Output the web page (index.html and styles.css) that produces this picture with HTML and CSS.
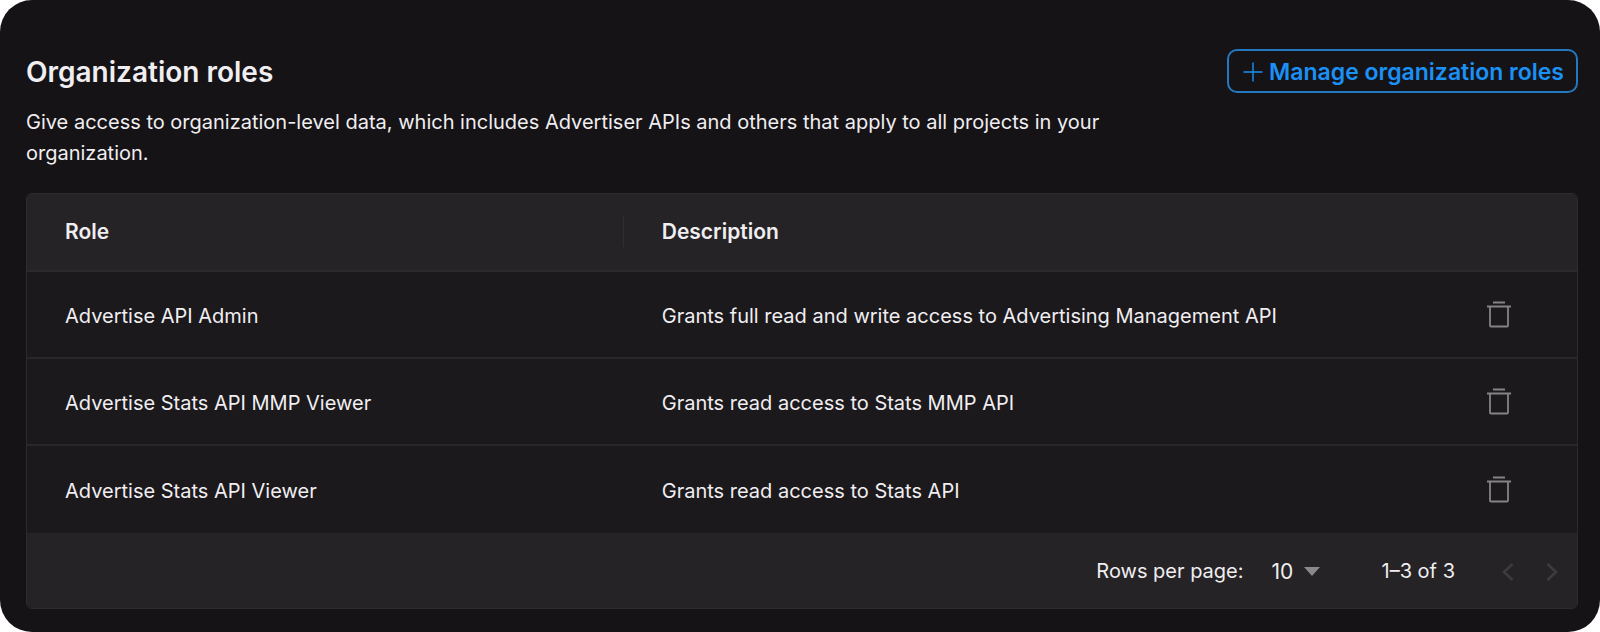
FILE: index.html
```
<!DOCTYPE html>
<html lang="en">
<head>
    <meta charset="UTF-8">
    <meta name="viewport" content="width=device-width, initial-scale=1.0">
    <title>Organization roles</title>
    <link rel="stylesheet" href="styles.css">
</head>
<body>
    <main class="panel">
        <header class="panel-header">
            <div class="intro">
                <h1>Organization roles</h1>
                <p>Give access to organization-level data, which includes Advertiser APIs and others that apply to all projects in your organization.</p>
            </div>
            <button type="button" class="manage-button">
                <svg width="20" height="20" viewBox="0 0 20 20" aria-hidden="true">
                    <path d="M10 0.5V19.5M0.5 10H19.5" fill="none" stroke="currentColor" stroke-width="1.4"/>
                </svg>
                Manage organization roles
            </button>
        </header>

        <section class="grid">
            <table class="roles">
                <thead>
                    <tr>
                        <th class="role-col" scope="col"><span class="th-inner">Role</span></th>
                        <th scope="col">Description</th>
                        <td class="action-col"></td>
                    </tr>
                </thead>
                <tbody>
                    <tr>
                        <td>Advertise API Admin</td>
                        <td>Grants full read and write access to Advertising Management API</td>
                        <td class="action-col">
                            <button type="button" class="icon-button" aria-label="Delete Advertise API Admin">
                                <svg width="24" height="27" viewBox="0 0 24 27" aria-hidden="true">
                                    <path d="M6 1.5H18M0 5.5H24M3 5.5V24.5Q3 25.5 4 25.5H20Q21 25.5 21 24.5V5.5" fill="none" stroke="currentColor" stroke-width="1.8"/>
                                </svg>
                            </button>
                        </td>
                    </tr>
                    <tr>
                        <td>Advertise Stats API MMP Viewer</td>
                        <td>Grants read access to Stats MMP API</td>
                        <td class="action-col">
                            <button type="button" class="icon-button" aria-label="Delete Advertise Stats API MMP Viewer">
                                <svg width="24" height="27" viewBox="0 0 24 27" aria-hidden="true">
                                    <path d="M6 1.5H18M0 5.5H24M3 5.5V24.5Q3 25.5 4 25.5H20Q21 25.5 21 24.5V5.5" fill="none" stroke="currentColor" stroke-width="1.8"/>
                                </svg>
                            </button>
                        </td>
                    </tr>
                    <tr>
                        <td>Advertise Stats API Viewer</td>
                        <td>Grants read access to Stats API</td>
                        <td class="action-col">
                            <button type="button" class="icon-button" aria-label="Delete Advertise Stats API Viewer">
                                <svg width="24" height="27" viewBox="0 0 24 27" aria-hidden="true">
                                    <path d="M6 1.5H18M0 5.5H24M3 5.5V24.5Q3 25.5 4 25.5H20Q21 25.5 21 24.5V5.5" fill="none" stroke="currentColor" stroke-width="1.8"/>
                                </svg>
                            </button>
                        </td>
                    </tr>
                </tbody>
            </table>

            <footer class="pagination">
                <label for="rows-per-page">Rows per page:</label>
                <div class="select-wrap">
                    <select id="rows-per-page">
                        <option selected>10</option>
                        <option>25</option>
                        <option>50</option>
                    </select>
                    <svg class="caret" width="16" height="9" viewBox="0 0 16 9" aria-hidden="true">
                        <path d="M0 0H16L8 9Z" fill="currentColor"/>
                    </svg>
                </div>
                <span class="range">1–3 of 3</span>
                <button type="button" class="page-button" aria-label="Previous page" disabled>
                    <svg width="12" height="18" viewBox="0 0 12 18" aria-hidden="true">
                        <path d="M10.5 1L2 9L10.5 17" fill="none" stroke="currentColor" stroke-width="2.6"/>
                    </svg>
                </button>
                <button type="button" class="page-button" aria-label="Next page" disabled>
                    <svg width="12" height="18" viewBox="0 0 12 18" aria-hidden="true">
                        <path d="M1.5 1L10 9L1.5 17" fill="none" stroke="currentColor" stroke-width="2.6"/>
                    </svg>
                </button>
            </footer>
        </section>
    </main>
</body>
</html>
```
FILE: styles.css
```
* {
    box-sizing: border-box;
}

body {
    margin: 0;
    background: #fff;
    color: #f0eef1;
    font-family: Inter, sans-serif;
    font-size: 20px;
    line-height: 31px;
}

button,
select {
    font: inherit;
}

.panel {
    min-height: 100vh;
    padding: 49px 22px 22px 26px;
    border-radius: 32px;
    background: #151316;
}

.panel-header {
    display: flex;
    align-items: flex-start;
    justify-content: space-between;
    gap: 40px;
    margin-bottom: 24px;
}

.intro {
    max-width: 1120px;
}

h1 {
    margin: 0 0 12px;
    font-size: 28px;
    font-weight: 600;
    line-height: 46px;
}

.intro p {
    margin: 0;
}

.manage-button {
    display: flex;
    align-items: center;
    gap: 6px;
    height: 44px;
    padding: 2px 12px 0 14px;
    border: 2px solid #2478c0;
    border-radius: 10px;
    background: none;
    color: #1b90f5;
    font-size: 23px;
    font-weight: 600;
    white-space: nowrap;
}

.grid {
    border: 1px solid #2d2b2f;
    border-radius: 6px;
    background: #1b191c;
    overflow: hidden;
}

.roles {
    width: 100%;
    border-collapse: separate;
    border-spacing: 0;
    table-layout: fixed;
    text-align: left;
}

.roles th,
.roles td {
    padding: 0 38px;
}

.roles thead th,
.roles thead td {
    height: 78px;
    padding-bottom: 2px;
    border-bottom: 2px solid #2b292d;
    background: #252326;
    font-size: 21px;
    font-weight: 600;
}

.roles tbody td {
    height: 87px;
    padding-top: 4px;
    border-bottom: 2px solid #29272b;
}

.roles tbody tr:last-child td {
    border-bottom: 0;
}

.roles .role-col {
    width: 38.5%;
    padding-right: 0;
}

.th-inner {
    display: block;
    border-right: 1px solid #302e32;
}

.roles .action-col {
    width: 156px;
    padding-top: 0;
}

.icon-button {
    display: flex;
    margin: 0 auto;
    padding: 0;
    border: 0;
    background: none;
    color: #858386;
}

.pagination {
    display: flex;
    align-items: center;
    justify-content: flex-end;
    height: 75px;
    padding: 2px 19px 0 0;
    background: #252326;
}

.select-wrap {
    position: relative;
    margin-left: 28px;
    color: #8a888c;
}

select {
    display: block;
    width: 48px;
    padding: 0;
    border: 0;
    background: none;
    color: #f0eef1;
    font-size: 21px;
    appearance: none;
}

/* drawn over the native select */
.caret {
    position: absolute;
    top: 11px;
    right: 0;
    pointer-events: none;
}

.range {
    margin: 0 47px 0 62px;
}

.page-button {
    display: flex;
    padding: 0;
    border: 0;
    background: none;
    color: #3d3b3f;
}

.page-button + .page-button {
    margin-left: 32px;
}
```
